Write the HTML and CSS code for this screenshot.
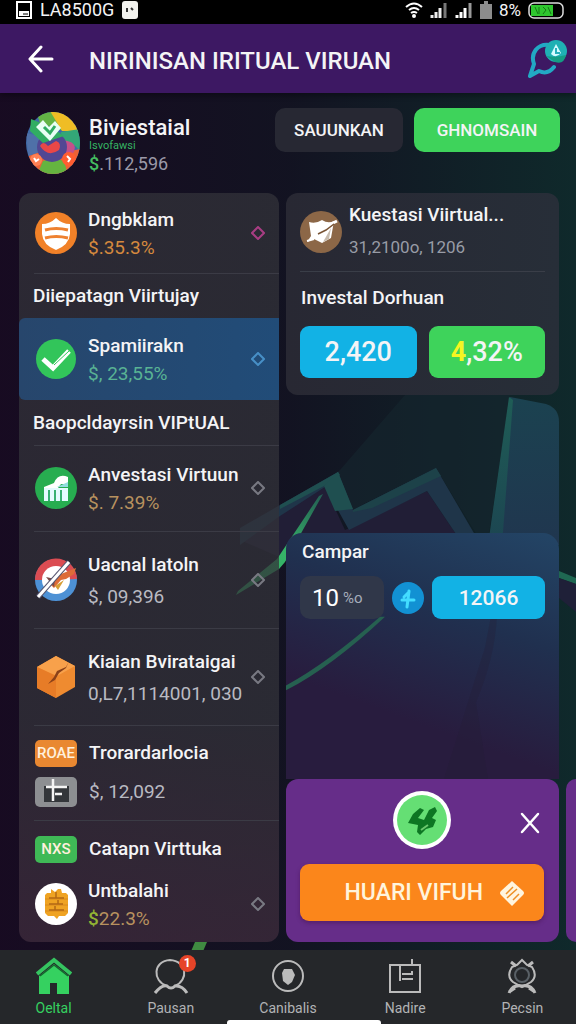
FILE: index.html
```html
<!DOCTYPE html>
<html lang="id">
<head>
  <meta charset="UTF-8">
  <meta name="viewport" content="width=device-width, initial-scale=1.0">
  <title>Investasi Virtual</title>
  <link rel="stylesheet" href="styles.css">
</head>
<body>
  <svg class="backdrop" viewBox="0 0 576 1024" preserveAspectRatio="none" aria-hidden="true">
    <defs>
      <linearGradient id="pillar" x1="0" y1="0" x2="0" y2="1">
        <stop offset="0" stop-color="#1b4250"/>
        <stop offset="1" stop-color="#20364f"/>
      </linearGradient>
      <linearGradient id="edge" x1="0" y1="0" x2="0" y2="1">
        <stop offset="0" stop-color="#1f5d56"/>
        <stop offset="1" stop-color="#1c4551"/>
      </linearGradient>
      <linearGradient id="spark" x1="0" y1="1" x2="1" y2="0">
        <stop offset="0" stop-color="#2fae63"/>
        <stop offset="0.5" stop-color="#36b468"/>
        <stop offset="1" stop-color="#235c52"/>
      </linearGradient>
    </defs>
    <path d="M286 515L340 470L405 395H510L488 540H480L436 468L353 510Z" fill="#15272f" opacity=".6"/>
    <path d="M240 540L280 514L325 487L345 530L427 491L460 540V560H286Z" fill="#211e36"/>
    <path d="M240 528L280 505L338 472L353 510L436 468L478 540L460 540L427 491L349 530L325 487L280 516L240 545Z" fill="#1f3549"/>
    <path d="M280 505L338 472L340 475L324 486L280 509Z" fill="#1f4f50"/>
    <path d="M324 486L338 472L353 509L335 511Z" fill="#1f4f50"/>
    <path d="M353 510L436 468L441 476L372 508L353 512Z" fill="#1d4249"/>
    <path d="M319 496L323 494L285 562L279 569L236 595L238 591L277 559Z" fill="url(#spark)"/>
    <path d="M510 397L546 404Q559 408 559 422V545H498Z" fill="url(#pillar)"/>
    <path d="M509 397L513 400L502 545H488Z" fill="url(#edge)"/>
    <path d="M559 571L576 578V584L559 578Z" fill="#1f6852"/>
    <path d="M559 578L576 584V612L559 598Z" fill="#1f2038"/>
    <path d="M195 942H207L201 956H189Z" fill="#3f8a41"/>
  </svg>

  <div class="statusbar">
    <svg width="16" height="18" viewBox="0 0 16 18"><path d="M1 1H15V17H1Z" fill="none" stroke="#fff" stroke-width="2"/><path d="M3 10H13V15H3Z" fill="#fff"/><path d="M7 13H12" stroke="#000"/></svg>
    <span class="carrier">LA8500G</span>
    <svg width="16" height="18" viewBox="0 0 16 18"><rect width="16" height="18" rx="3" fill="#f2f2ee"/><path d="M5 7V11M9 7L11 9" fill="none" stroke="#333" stroke-width="2"/></svg>
    <div class="signals">
      <svg width="18" height="16" viewBox="0 0 18 16" fill="none" stroke="#fff" stroke-width="2"><path d="M1 5Q9-2 17 5M4 8Q9 4 14 8M6 11Q9 9 12 11"/><circle cx="9" cy="14" r="1"/></svg>
      <svg width="18" height="16" viewBox="0 0 18 16" stroke-width="3"><path d="M2 16V13M6 16V10M10 16V6" stroke="#eee"/><path d="M15 16V1" stroke="#777"/></svg>
      <svg width="18" height="16" viewBox="0 0 18 16" stroke-width="3"><path d="M2 16V13M6 16V10M10 16V6" stroke="#fff"/><path d="M15 16V1" stroke="#999"/></svg>
      <svg width="12" height="18" viewBox="0 0 12 18"><path d="M0 3H4V0H8V3H12V18H0Z" fill="#8c8c8c"/></svg>
      <span class="percent">8%</span>
      <svg width="36" height="17" viewBox="0 0 36 17"><rect x="1" y="1" width="34" height="15" rx="5" fill="none" stroke="#ddd" stroke-width="1.5"/><path d="M3 3H25V14H3Z" fill="#2fc62f"/><path d="M7 5L10 12M11 5V12M15 5L18 8L15 12M20 5L23 12" stroke="#157615" fill="none"/></svg>
    </div>
  </div>

  <header class="appbar">
    <button class="icon-button" aria-label="Kembali">
      <svg width="26" height="28" viewBox="0 0 26 28" fill="none" stroke="#fff" stroke-width="3" stroke-linecap="round" stroke-linejoin="round"><path d="M13 2L2 14L13 26M3 14H24"/></svg>
    </button>
    <h1>NIRINISAN IRITUAL VIRUAN</h1>
    <button class="icon-button" aria-label="Pesan">
      <svg width="40" height="42" viewBox="0 0 40 42"><path d="M22 7C10 5 2 15 6 26L2 38L11 33C17 36 22 34 26 29" fill="none" stroke="#22a9c4" stroke-width="4" stroke-linejoin="round" stroke-linecap="round"/><circle cx="28" cy="13" r="11" fill="#1fb0b4"/><path d="M18 18Q28 20 38 17Q36 27 27 24Z" fill="#159c84"/><path d="M28 6L33 15Q28 21 23 16Z" fill="#d4fbff"/><path d="M28 10V15H32" stroke="#26aebc" stroke-width="2" fill="none"/></svg>
    </button>
  </header>

  <section class="profile">
    <svg class="avatar" width="54" height="64" viewBox="0 0 54 64">
      <defs><clipPath id="face"><ellipse cx="27" cy="32" rx="27" ry="31"/></clipPath></defs>
      <g clip-path="url(#face)">
        <path d="M0 0H54V64H0Z" fill="#3f6aa7"/>
        <path d="M10 0H30L38 20L14 12Z" fill="#63b445"/>
        <path d="M24 0H54V20L36 20Z" fill="#efbd25"/>
        <path d="M35 21L54 18V40Q45 29 36 30Z" fill="#33a777"/>
        <path d="M0 22L14 25L15 45L3 51Z" fill="#4f70a8"/>
        <path d="M0 46L14 41Q27 53 40 41L54 38V64H0Z" fill="#ec6236"/>
        <path d="M17 50Q27 46 38 50L42 64H11Z" fill="#65b440"/>
        <path d="M36 29Q55 31 46 44L36 48Q43 37 36 29Z" fill="#c4508a"/>
        <circle cx="26" cy="36" r="15" fill="#514793"/>
        <circle cx="10" cy="49" r="6" fill="#ff8054"/><circle cx="43" cy="48" r="7" fill="#ff5d31"/>
        <path d="M8 47L10 50L13 48M41 45L44 48L42 51" stroke="#fff" stroke-width="2" fill="none"/>
      </g>
      <path d="M5 8L25 16L38 25L17 32L4 20Z" fill="#31ad62"/>
      <path d="M10 16L17 9L23 16L29 10L35 17L24 30Z" fill="#e9fff4"/>
      <path d="M18 16L24 22L29 15" fill="none" stroke="#31ad62" stroke-width="3"/>
      <path d="M14 35Q17 29 22 35L30 30Q36 32 33 39Q22 47 14 35Z" fill="#e94747"/>
    </svg>
    <div class="profile-text">
      <h2>Biviestaial</h2>
      <small>Isvofawsi</small>
      <p><b>$</b>.112,596</p>
    </div>
    <button class="pill dark">SAUUNKAN</button>
    <button class="pill green">GHNOMSAIN</button>
  </section>

  <main class="content">
    <section class="list">
      <a class="row first" href="#">
        <svg class="row-icon" viewBox="0 0 42 42"><circle cx="21" cy="21" r="21" fill="#f18128"/><path d="M21 6Q27 12 35 12V22Q34 33 21 38Q8 33 7 22V12Q15 12 21 6Z" fill="#fff"/><path d="M10 18Q21 15 33 18M10 26Q21 23 33 26" stroke="#ee8130" stroke-width="3" fill="none"/></svg>
        <span class="row-text"><strong>Dngbklam</strong><span class="amber">$.35.3%</span></span>
        <svg class="diamond pink" viewBox="0 0 14 14"><path d="M7 1L13 7L7 13L1 7Z"/></svg>
      </a>
      <h3 class="divided">Diiepatagn Viirtujay</h3>
      <a class="row active" href="#">
        <svg class="row-icon" viewBox="0 0 42 42"><circle cx="21" cy="21" r="20" fill="#32c55a"/><path d="M8 21L18 30L34 13" fill="none" stroke="#fff" stroke-width="5"/><path d="M19 27L34 13" stroke="#32c55a"/></svg>
        <span class="row-text"><strong>Spamiirakn</strong><span class="mint">$, 23,55%</span></span>
        <svg class="diamond blue" viewBox="0 0 14 14"><path d="M7 1L13 7L7 13L1 7Z"/></svg>
      </a>
      <h3>Baopcldayrsin VIPtUAL</h3>
      <a class="row medium divided" href="#">
        <svg class="row-icon" viewBox="0 0 42 42"><circle cx="21" cy="21" r="21" fill="#27ad50"/><path d="M9 20L19 16Q23 6 33 10V17H26L23 21H9Z" fill="#fff"/><path d="M9 21H33V34H9Z" fill="#e3fbff"/><path d="M14 23V34M20 23V34M26 23V34" stroke="#37b173" stroke-width="2"/><path d="M22 20L33 15V20Z" fill="#93dddf"/></svg>
        <span class="row-text"><strong>Anvestasi Virtuun</strong><span class="sand">$. 7.39%</span></span>
        <svg class="diamond" viewBox="0 0 14 14"><path d="M7 1L13 7L7 13L1 7Z"/></svg>
      </a>
      <a class="row tall divided" href="#">
        <svg class="row-icon" viewBox="0 0 42 42"><circle cx="21" cy="21" r="21" fill="#4d91d5"/><path d="M0 21A21 21 0 0 1 42 20L21 21Z" fill="#db4c52"/><circle cx="21" cy="21" r="14" fill="#fff"/><path d="M14 24L21 17L41 9L39 15L31 20L26 21L19 29Z" fill="#dd6c38"/><path d="M11 18L20 20L19 28Z" fill="#774a46"/><path d="M20 27L29 21L23 31Z" fill="#d69e36"/><path d="M3 38L34 3" stroke="#555570" stroke-width="5"/><path d="M3 38L34 3" stroke="#fff" stroke-width="3"/></svg>
        <span class="row-text"><strong>Uacnal Iatoln</strong><span>$, 09,396</span></span>
        <svg class="diamond" viewBox="0 0 14 14"><path d="M7 1L13 7L7 13L1 7Z"/></svg>
      </a>
      <a class="row tall divided" href="#">
        <svg class="row-icon" viewBox="0 0 42 42"><path d="M21 0L40 10V31L21 42L2 32V11Z" fill="#ef8b30"/><path d="M21 0L40 10L22 20L2 11Z" fill="#f8a14b"/><path d="M2 11L21 20V42L2 32Z" fill="#e77c27"/><path d="M34 5L31 12L24 17L20 24L13 28L19 21L22 15L31 11Z" fill="#8a4119"/></svg>
        <span class="row-text"><strong>Kiaian Bvirataigai</strong><span>0,L7,1114001, 030</span></span>
        <svg class="diamond" viewBox="0 0 14 14"><path d="M7 1L13 7L7 13L1 7Z"/></svg>
      </a>
      <div class="pair divided">
        <span class="tag orange">ROAE</span><strong>Trorardarlocia</strong>
        <svg class="wallet" viewBox="0 0 42 30"><rect width="42" height="30" rx="5" fill="#8d8f92"/><path d="M9 9H34V25H9Z" fill="#33363a"/><path d="M18 2V24M11 10H32M20 17H27" stroke="#f4f4f4" stroke-width="2.5"/></svg><span>$, 12,092</span>
      </div>
      <div class="pair last divided">
        <span class="tag lime">NXS</span><strong>Catapn Virttuka</strong>
      </div>
      <a class="row bottom" href="#">
        <svg class="row-icon" viewBox="0 0 42 44"><circle cx="21" cy="22" r="21" fill="#fff"/><path d="M16 7L20 10L23 7L26 7L27 11H31L33 13V31L30 34H24L22 37L19 34H13L10 31V13L12 11H16Z" fill="#efa323"/><path d="M10 17H33M10 23H33M10 29H33" stroke="#d98a1c"/><path d="M14 16H29M14 22H28M14 28H29M21 10V16M23 18V22M20 24V28" stroke="#b26816" stroke-width="1.5"/></svg>
        <span class="row-text"><strong>Untbalahi</strong><span class="sand"><b>$</b>22.3%</span></span>
        <svg class="diamond" viewBox="0 0 14 14"><path d="M7 1L13 7L7 13L1 7Z"/></svg>
      </a>
    </section>

    <div class="side">
      <section class="card">
        <div class="card-head">
          <svg class="row-icon" viewBox="0 0 42 42"><circle cx="21" cy="21" r="21" fill="#8c6747"/><path d="M9 11Q16 13 22 9Q28 13 34 10L31 27L22 32L14 28L7 31L11 25Z" fill="#fff"/><path d="M7 30L14 28" fill="none" stroke="#fff" stroke-width="2"/><path d="M33 12L37 10" stroke="#fff" stroke-width="3"/><path d="M18 23L26 19L34 13" fill="none" stroke="#795436" stroke-width="1.5"/><path d="M31 17L29 28L23 31Z" fill="#c7bbae"/></svg>
          <div class="row-text"><strong>Kuestasi Viirtual...</strong><span>31,2100o, 1206</span></div>
        </div>
        <h3>Investal Dorhuan</h3>
        <div class="amounts">
          <button class="amount sky">2,420</button>
          <button class="amount green"><em>4</em>,32%</button>
        </div>
      </section>

      <section class="panel">
        <svg class="panel-lines" viewBox="0 0 273 247" preserveAspectRatio="none" aria-hidden="true"><path d="M0 153Q42 130 94 84L99 84Q46 134 0 158Z" fill="#266050"/><path d="M205 83L199 115L158 247H202L190 170Q209 125 211 83Z" fill="#241f36" opacity=".3"/></svg>
        <h3>Campar</h3>
        <div class="compare">
          <label class="rate"><input type="text" value="10" aria-label="Persentase"><span>%o</span></label>
          <button class="round" aria-label="Tambah"><svg width="32" height="32" viewBox="0 0 32 32"><circle cx="16" cy="16" r="16" fill="#1291d3"/><path d="M17 9L15 25M10 18H22M12 15L17 10" fill="none" stroke="#43ddff" stroke-width="3" stroke-linecap="round"/></svg></button>
          <button class="amount sky small">12066</button>
        </div>
      </section>

      <section class="promo">
        <div class="promo-top">
          <svg class="promo-logo" width="58" height="58" viewBox="0 0 58 58"><circle cx="29" cy="29" r="29" fill="#fff"/><circle cx="29" cy="29" r="25" fill="#65df74"/><path d="M27 17L31 19L25 27L31 29L36 19L42 16L44 20L39 27L43 29L40 36L33 38L27 44L24 41L25 34L15 32L20 23Z" fill="#0d7623"/><path d="M28 39L35 34" stroke="#6cc76e" stroke-width="2"/></svg>
          <button class="icon-button close" aria-label="Tutup"><svg width="20" height="22" viewBox="0 0 20 22"><path d="M2 2L18 20M18 2L2 20" stroke="#fff" stroke-width="2.5" stroke-linecap="round"/></svg></button>
        </div>
        <button class="cta"><span>HUARI VIFUH</span>
          <svg width="26" height="28" viewBox="0 0 26 28"><path d="M13 2L24 12Q26 14 24 16L13 27L2 16Q0 14 2 12Z" fill="#fff5df"/><path d="M7 15L14 8M8 19L18 10M14 21L20 15" stroke="#ee9126" stroke-width="1.5"/></svg>
        </button>
      </section>
    </div>
    <div class="next-promo"></div>
  </main>

  <nav class="tabs">
    <a class="current" href="#">
      <svg width="36" height="38" viewBox="0 0 36 38"><path d="M18 7L33 19V37H21V26H14V37H3V19Z" fill="#35d160"/><path d="M1 17L18 3L35 17" fill="none" stroke="#35c460" stroke-width="4"/><path d="M4 19L18 8L32 19" fill="none" stroke="#16652e" stroke-width="1.5"/></svg>
      <span>Oeltal</span>
    </a>
    <a href="#">
      <svg width="36" height="38" viewBox="0 0 36 38" fill="none" stroke="#bbb" stroke-width="2"><path d="M14 29C-1 24 0 4 17 3C34 4 36 23 22 29"/><path d="M2 36Q9 27 14 29Q18 33 22 29Q29 28 34 36" stroke-width="3"/></svg>
      <span>Pausan</span>
      <b class="badge">1</b>
    </a>
    <a href="#">
      <svg width="36" height="38" viewBox="0 0 36 38"><circle cx="18" cy="19" r="15" fill="none" stroke="#bbb" stroke-width="2"/><path d="M14 12H22L25 18L22 25L18 28L13 24L12 16Z" fill="#bbb"/></svg>
      <span>Canibalis</span>
    </a>
    <a href="#">
      <svg width="36" height="38" viewBox="0 0 36 38" fill="none" stroke="#bbb" stroke-width="2"><path d="M3 8H33V35H3ZM13 9V24M15 17H25V14M15 22H26M22 8H25V2"/></svg>
      <span>Nadire</span>
    </a>
    <a href="#">
      <svg width="36" height="38" viewBox="0 0 36 38" fill="none" stroke="#bbb" stroke-width="2"><path d="M13 8L18 3L23 8L28 10Q34 19 27 25L18 30L9 25Q2 19 8 10Z"/><circle cx="18" cy="18" r="7" stroke="#596066"/><path d="M7 5L12 9M29 5L24 9M5 36Q9 27 18 29Q27 27 31 36M5 35L11 31M25 31L31 35" stroke-width="3"/></svg>
      <span>Pecsin</span>
    </a>
    <i class="home-bar"></i>
  </nav>
</body>
</html>
```
FILE: styles.css
```css
* {
  box-sizing: border-box;
}
body {
  position: relative;
  display: flex;
  flex-direction: column;
  min-height: 100vh;
  margin: 0;
  overflow-x: hidden;
  font-family: Roboto, "Liberation Sans", sans-serif;
  color: #f4f4f6;
  background: linear-gradient(90deg, rgba(24, 10, 34, 0.9), rgba(18, 18, 34, 0.8) 50%, rgba(14, 46, 46, 0.8)), #14161f;
}
h1, h2, h3, p {
  margin: 0;
}
h3, strong {
  font-size: 19px;
  line-height: 24px;
  font-weight: 500;
}
a {
  color: inherit;
  text-decoration: none;
}
button {
  padding: 0;
  border: none;
  font-family: inherit;
  color: inherit;
  cursor: pointer;
}
svg {
  display: block;
  flex: none;
}
.backdrop {
  position: absolute;
  inset: 0;
  z-index: -1;
  width: 100%;
  height: 100%;
}

/* top bars */
.statusbar {
  display: flex;
  align-items: center;
  gap: 8px;
  height: 24px;
  padding: 0 12px 4px 16px;
  font-size: 18px;
  line-height: 20px;
  background: #000;
}
.signals {
  display: flex;
  align-items: center;
  gap: 7px;
  margin-left: auto;
}
.percent {
  font-size: 17px;
}
.appbar {
  display: flex;
  align-items: center;
  height: 69px;
  padding: 0 8px 0 28px;
  background: #3d1863;
  box-shadow: 0 2px 6px rgba(0, 0, 0, 0.4);
}
.appbar h1 {
  flex: 1;
  padding: 4px 0 0 35px;
  font-size: 24px;
  line-height: 32px;
  font-weight: 500;
}
.icon-button {
  background: none;
}
.profile {
  display: flex;
  align-items: center;
  height: 100px;
  padding: 0 16px 0 26px;
}
.profile-text {
  flex: 1;
  padding: 6px 0 0 9px;
}
.profile-text h2 {
  font-size: 22px;
  line-height: 24px;
  font-weight: 500;
}
.profile-text small {
  display: block;
  font-size: 11px;
  line-height: 12px;
  color: #35b463;
}
.profile-text p {
  font-size: 18px;
  line-height: 24px;
  color: #9b9aa8;
}
.profile-text b {
  font-weight: 500;
  color: #44bd60;
}
.pill {
  align-self: flex-start;
  height: 44px;
  margin-top: 15px;
  border-radius: 10px;
  font-size: 17px;
  font-weight: 500;
}
.pill.dark {
  width: 128px;
  margin-right: 11px;
  background: #272833;
}
.pill.green {
  width: 146px;
}
.green {
  background: #3ed35b;
}

/* columns */
.content {
  flex: 1;
  display: grid;
  grid-template-columns: 260fr 273fr 10px;
  gap: 7px;
  padding: 0 0 8px 19px;
}
.list {
  display: flex;
  flex-direction: column;
  border-radius: 12px;
  overflow: hidden;
  background: linear-gradient(180deg, rgba(50, 50, 57, 0.75) 70%, rgba(63, 44, 61, 0.75));
}
.list h3 {
  height: 45px;
  padding: 11px 14px;
}
.divided {
  background: linear-gradient(#3b3b45, #3b3b45) 15px 0 / 100% 1px no-repeat;
}
.row {
  display: flex;
  align-items: center;
  height: 82px;
  padding: 0 14px 0 16px;
}
.row.first {
  height: 80px;
}
.row.medium {
  height: 86px;
}
.row.tall {
  height: 97px;
}
.row.bottom {
  height: 70px;
  padding-bottom: 6px;
}
.row.active {
  border-radius: 6px 0 0 6px;
  background: linear-gradient(90deg, #27466c, #214c78);
}
.row-icon {
  width: 42px;
  height: 44px;
}
.row-text {
  flex: 1;
  display: flex;
  flex-direction: column;
  gap: 4px;
  min-width: 0;
  padding: 2px 0 0 11px;
  white-space: nowrap;
}
.row-text span, .pair span {
  font-size: 19px;
  line-height: 24px;
  color: #b9bac2;
}
.tall .row-text {
  gap: 8px;
}
.row-text .amber {
  color: #d5893e;
}
.row-text .sand {
  color: #b8925f;
}
.row-text .mint {
  color: #59b394;
}
.sand b {
  font-weight: 500;
  color: #91b334;
}
.diamond {
  width: 14px;
  height: 14px;
  fill: none;
  stroke: #787982;
  stroke-width: 2;
}
.diamond.pink {
  stroke: #a83d83;
}
.diamond.blue {
  stroke: #478fc6;
}
.pair {
  display: grid;
  grid-template-columns: 42px 1fr;
  gap: 9px 12px;
  align-items: center;
  height: 95px;
  padding: 14px 16px 12px;
}
.pair.last {
  height: 52px;
  padding-bottom: 8px;
}
.pair .tag {
  height: 27px;
  border-radius: 5px;
  font-size: 15px;
  line-height: 27px;
  font-weight: 500;
  text-align: center;
  color: #fff0dd;
}
.tag.orange {
  background: #e98831;
}
.tag.lime {
  background: #3fb956;
}
.wallet {
  width: 42px;
  height: 30px;
}

/* right side */
.side {
  display: flex;
  flex-direction: column;
}
.card {
  height: 202px;
  padding: 0 14px;
  border-radius: 12px;
  background: linear-gradient(90deg, #282833, #272e38);
}
.card-head {
  display: flex;
  align-items: center;
  height: 79px;
  border-bottom: 1px solid #3a3e48;
}
.card-head .row-text {
  gap: 8px;
  padding: 0 0 2px 7px;
}
.card-head .row-text span {
  font-size: 17px;
  color: #989ca6;
}
.card h3 {
  padding: 14px 0 16px 1px;
}
.amounts {
  display: grid;
  grid-template-columns: 1fr 1fr;
  gap: 12px;
}
.amount {
  height: 52px;
  border-radius: 9px;
  font-size: 27px;
  font-weight: 500;
}
.amount em {
  font-style: normal;
  font-weight: 700;
  color: #f5f522;
}
.sky {
  background: #12b2e5;
}
.panel {
  position: relative;
  flex: 1;
  margin-top: 138px;
  padding: 7px 14px;
  border-radius: 16px 16px 0 0;
  background: linear-gradient(20deg, #281c3e 30%, #20304f 65%, #234566);
}
.panel-lines {
  position: absolute;
  inset: 0;
  z-index: 0;
  width: 100%;
  height: 100%;
}
.panel h3, .compare {
  position: relative;
}
.panel h3 {
  padding-left: 2px;
}
.compare {
  display: grid;
  grid-template-columns: 84px 32px 1fr;
  gap: 8px;
  align-items: center;
  margin-top: 12px;
}
.rate {
  display: flex;
  align-items: center;
  gap: 3px;
  height: 43px;
  padding-left: 12px;
  border-radius: 10px;
  background: #303749;
}
.rate input {
  width: 28px;
  padding: 0;
  border: none;
  font: inherit;
  font-size: 24px;
  color: #fff;
  background: none;
}
.rate span {
  font-size: 15px;
  color: #a6adba;
}
.round {
  border-radius: 50%;
  background: none;
}
.small {
  height: 43px;
  font-size: 21px;
}
.promo {
  height: 163px;
  padding: 12px 15px 0 14px;
  border-radius: 12px;
  background: #662d89;
}
.promo-top {
  display: grid;
  grid-template-columns: 1fr auto 1fr;
  align-items: center;
  height: 58px;
}
.promo-logo {
  grid-column: 2;
}
.close {
  justify-self: end;
  margin-right: 4px;
  padding-top: 6px;
}
.cta {
  display: flex;
  align-items: center;
  justify-content: flex-end;
  gap: 16px;
  width: 100%;
  height: 57px;
  margin-top: 15px;
  padding-right: 19px;
  border-radius: 9px;
  font-size: 23px;
  font-weight: 500;
  color: #fff4dc;
  background: #fb861b;
  box-shadow: 0 2px 4px rgba(60, 10, 60, 0.4);
}
.next-promo {
  align-self: end;
  height: 163px;
  border-radius: 12px 0 0 12px;
  background: #662d89;
}

/* bottom navigation */
.tabs {
  position: relative;
  display: grid;
  grid-template-columns: repeat(5, 1fr);
  height: 74px;
  margin: 0 -5px;
  padding: 7px 0 0;
  background: #25272a;
}
.tabs a {
  position: relative;
  display: flex;
  flex-direction: column;
  align-items: center;
  gap: 5px;
  font-size: 14px;
  line-height: 16px;
  color: #b2b3b5;
}
.tabs a.current {
  color: #35d160;
}
.badge {
  position: absolute;
  top: -2px;
  left: calc(50% + 8px);
  width: 17px;
  height: 17px;
  border-radius: 50%;
  font-size: 12px;
  line-height: 17px;
  text-align: center;
  color: #fff;
  background: #e64428;
}
.home-bar {
  position: absolute;
  bottom: 0;
  left: 50%;
  width: 154px;
  height: 4px;
  margin-left: -61px;
  border-radius: 3px 3px 0 0;
  background: #fff;
}
```
